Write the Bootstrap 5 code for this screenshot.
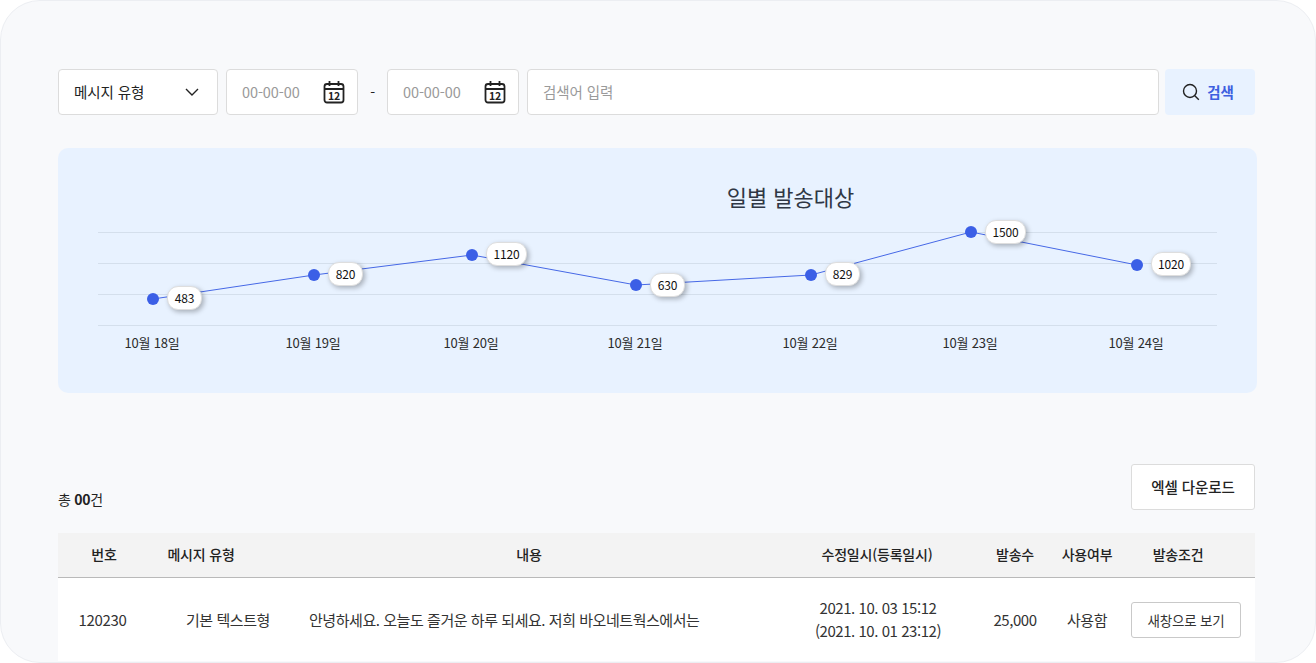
<!DOCTYPE html>
<html lang="ko">
<head>
<meta charset="utf-8">
<title>발송 통계</title>
<link href="https://cdn.jsdelivr.net/npm/bootstrap@5.3.0/dist/css/bootstrap.min.css" rel="stylesheet">
<style>
html,body{height:100%;margin:0;background:#fff;overflow:hidden}
body{font-family:"Noto Sans CJK KR","Noto Sans",sans-serif;color:#222;font-size:14px;letter-spacing:-.2px}
.frame{width:1316px;height:663px;border:1px solid #eceef2;border-radius:40px;background:#f8f9fb;overflow:hidden;padding:68px 58px 0 57px}
.inner{margin-right:2px}
.fbox{height:46px;background:#fff;border:1px solid #dcdcdc;border-radius:4px}
.typesel{width:160px;padding:0 18px 0 15px;font-size:14.5px;color:#222;letter-spacing:-.1px}
.datebox{width:132px;padding:0 12px 0 15px}
.datebox input,.keybox input{border:0;outline:0;background:transparent;padding:0;width:100%;font-size:14.5px;letter-spacing:-.1px;color:#222;font-family:inherit}
.datebox input::placeholder,.keybox input::placeholder{color:#9a9a9a;opacity:1}
.keybox{padding:0 15px;flex:1 1 auto}
.dashsep{width:29px;text-align:center;margin:0 -8px;font-size:14px}
.searchbtn{width:90px;height:46px;background:#e8f2ff;border:0;border-radius:4px;color:#3d5fe0;font-weight:700;font-size:14.5px;gap:7px;margin-left:-2px;padding:0 4px 0 0;letter-spacing:-.1px}
.chartpanel{height:245px;margin-top:33px;background:#e8f2ff;border-radius:10px;position:relative}
.charttitle{padding:32px 0 0 266px;text-align:center;font-size:22px;line-height:32px;color:#2f3745;letter-spacing:-.05px;margin:0;font-weight:400}
.chartsvg{position:absolute;left:0;top:0}
.pill{position:absolute;height:24px;background:#fff;border:1px solid #dedede;border-radius:11px;box-shadow:2px 2px 5px rgba(0,0,0,.28);font-size:12px;line-height:22px;text-align:center;color:#111;letter-spacing:-.1px}
.xlab{position:absolute;top:185px;width:80px;margin-left:-41px;text-align:center;font-size:13px;line-height:20px;color:#2b2b2b;letter-spacing:-.2px}
.listhead{margin-top:71px;height:46px}
.totaltxt{font-size:14px;line-height:20px;margin:0 0 1px;letter-spacing:-.3px}
.xlsbtn{width:124px;height:46px;background:#fff;border:1px solid #dcdcdc;border-radius:3px;font-size:14.5px;font-weight:500;color:#222;padding:0;letter-spacing:-.1px}
.msgtable{table-layout:fixed;width:1197px;margin:23px 0 0;--bs-table-bg:transparent;border-collapse:collapse}
.msgtable th{height:44px;background:#f3f3f3;border-bottom:1px solid #b9b9b9;padding:0;text-align:center;vertical-align:middle;font-size:14px;font-weight:500;color:#222;letter-spacing:-.2px}
.msgtable td{height:84px;background:#fff;border:0;padding:0;text-align:center;vertical-align:middle;font-size:15px;line-height:23px;color:#333;letter-spacing:-.45px;font-feature-settings:"calt" 0,"case" 0}
.msgtable td.idcell{padding-right:3px;letter-spacing:-.35px}
.msgtable td.datecell{padding-left:2px}
.msgtable th.countcol,.msgtable td.countcol{padding-left:32px}
.msgtable th.condcol{padding-right:23px}
.msgtable td.condcol{padding:2px 14px 0 0;text-align:right}
.msgtable td.typecell{text-align:left;padding-left:36px;white-space:nowrap}
.msgtable td.textcell{text-align:left;padding-left:57px;white-space:nowrap}
.popbtn{width:110px;height:36px;background:#fff;border:1px solid #c9c9c9;border-radius:3px;font-size:13.5px;color:#333;padding:0;vertical-align:middle;letter-spacing:-.2px}
.msgtable col.c1{width:92px}.msgtable col.c2{width:102px}.msgtable col.c3{width:554px}.msgtable col.c4{width:142px}.msgtable col.c5{width:102px}.msgtable col.c6{width:74px}.msgtable col.c7{width:131px}
</style>
</head>
<body>
<div class="frame">
  <div class="inner d-flex align-items-center gap-2">
    <button type="button" class="fbox typesel btn d-flex align-items-center justify-content-between">
      <span>메시지 유형</span>
      <svg width="14" height="8" viewBox="0 0 14 8" fill="none" stroke="#222" stroke-width="1.4"><path d="M1 1l6 6 6-6"/></svg>
    </button>
    <div class="fbox datebox d-flex align-items-center">
      <input type="text" placeholder="00-00-00" aria-label="시작일">
      <svg class="flex-shrink-0" width="22" height="24" viewBox="0 0 22 24" fill="none" stroke="#222"><rect x="1.500" y="4" width="19" height="18.500" rx="2.500" stroke-width="1.800"/><path d="M1.500 9h19M6.500 1v5M15.500 1v5" stroke-width="1.800"/><text x="11" y="20" text-anchor="middle" font-size="10.500" font-weight="700" fill="#222" stroke="none" font-family="Noto Sans CJK KR">12</text></svg>
    </div>
    <div class="dashsep">-</div>
    <div class="fbox datebox d-flex align-items-center">
      <input type="text" placeholder="00-00-00" aria-label="종료일">
      <svg class="flex-shrink-0" width="22" height="24" viewBox="0 0 22 24" fill="none" stroke="#222"><rect x="1.500" y="4" width="19" height="18.500" rx="2.500" stroke-width="1.800"/><path d="M1.500 9h19M6.500 1v5M15.500 1v5" stroke-width="1.800"/><text x="11" y="20" text-anchor="middle" font-size="10.500" font-weight="700" fill="#222" stroke="none" font-family="Noto Sans CJK KR">12</text></svg>
    </div>
    <div class="fbox keybox d-flex align-items-center">
      <input type="text" placeholder="검색어 입력" aria-label="검색어">
    </div>
    <button type="button" class="searchbtn btn d-flex align-items-center justify-content-center">
      <svg width="18" height="18" viewBox="0 0 18 18" fill="none" stroke="#222" stroke-width="1.400"><circle cx="8" cy="8" r="6.500"/><path d="M12.800 12.800l4 4"/></svg>
      <span>검색</span>
    </button>
  </div>

  <section class="chartpanel">
    <h2 class="charttitle">일별 발송대상</h2>
    <svg class="chartsvg" width="1199" height="245" viewBox="0 0 1199 245">
      <g stroke="#d4dfec" stroke-width="1"><path d="M40 84.500H1159M40 115.500H1159M40 146.500H1159M40 177.500H1159"/></g>
      <polyline points="95,151 256,127 414,107 578,137 753,127 913,84 1079,117" fill="none" stroke="#4668e6" stroke-width="1"/>
      <g fill="#3b5fe6"><circle cx="95" cy="151" r="6"/><circle cx="256" cy="127" r="6"/><circle cx="414" cy="107" r="6"/><circle cx="578" cy="137" r="6"/><circle cx="753" cy="127" r="6"/><circle cx="913" cy="84" r="6"/><circle cx="1079" cy="117" r="6"/></g>
    </svg>
    <div class="pill" style="left:109px;top:138px;width:35px">483</div>
    <div class="pill" style="left:270px;top:114px;width:35px">820</div>
    <div class="pill" style="left:428px;top:94px;width:41px">1120</div>
    <div class="pill" style="left:592px;top:125px;width:35px">630</div>
    <div class="pill" style="left:767px;top:114px;width:35px">829</div>
    <div class="pill" style="left:927px;top:72px;width:41px">1500</div>
    <div class="pill" style="left:1093px;top:104px;width:40px">1020</div>
    <span class="xlab" style="left:95px">10월 18일</span>
    <span class="xlab" style="left:256px">10월 19일</span>
    <span class="xlab" style="left:414px">10월 20일</span>
    <span class="xlab" style="left:578px">10월 21일</span>
    <span class="xlab" style="left:753px">10월 22일</span>
    <span class="xlab" style="left:913px">10월 23일</span>
    <span class="xlab" style="left:1079px">10월 24일</span>
  </section>

  <div class="inner listhead d-flex align-items-end justify-content-between">
    <p class="totaltxt">총 <strong>00</strong>건</p>
    <button type="button" class="xlsbtn btn">엑셀 다운로드</button>
  </div>

  <table class="table msgtable">
    <colgroup><col class="c1"><col class="c2"><col class="c3"><col class="c4"><col class="c5"><col class="c6"><col class="c7"></colgroup>
    <thead>
      <tr><th>번호</th><th>메시지 유형</th><th>내용</th><th>수정일시(등록일시)</th><th class="countcol">발송수</th><th>사용여부</th><th class="condcol">발송조건</th></tr>
    </thead>
    <tbody>
      <tr>
        <td class="idcell">120230</td>
        <td class="typecell">기본 텍스트형</td>
        <td class="textcell">안녕하세요. 오늘도 즐거운 하루 되세요. 저희 바오네트웍스에서는</td>
        <td class="datecell">2021. 10. 03 15:12<br>(2021. 10. 01 23:12)</td>
        <td class="countcol">25,000</td>
        <td>사용함</td>
        <td class="condcol"><button type="button" class="popbtn btn">새창으로 보기</button></td>
      </tr>
    </tbody>
  </table>
</div>
<script src="https://cdn.jsdelivr.net/npm/bootstrap@5.3.0/dist/js/bootstrap.bundle.min.js"></script>
</body>
</html>
